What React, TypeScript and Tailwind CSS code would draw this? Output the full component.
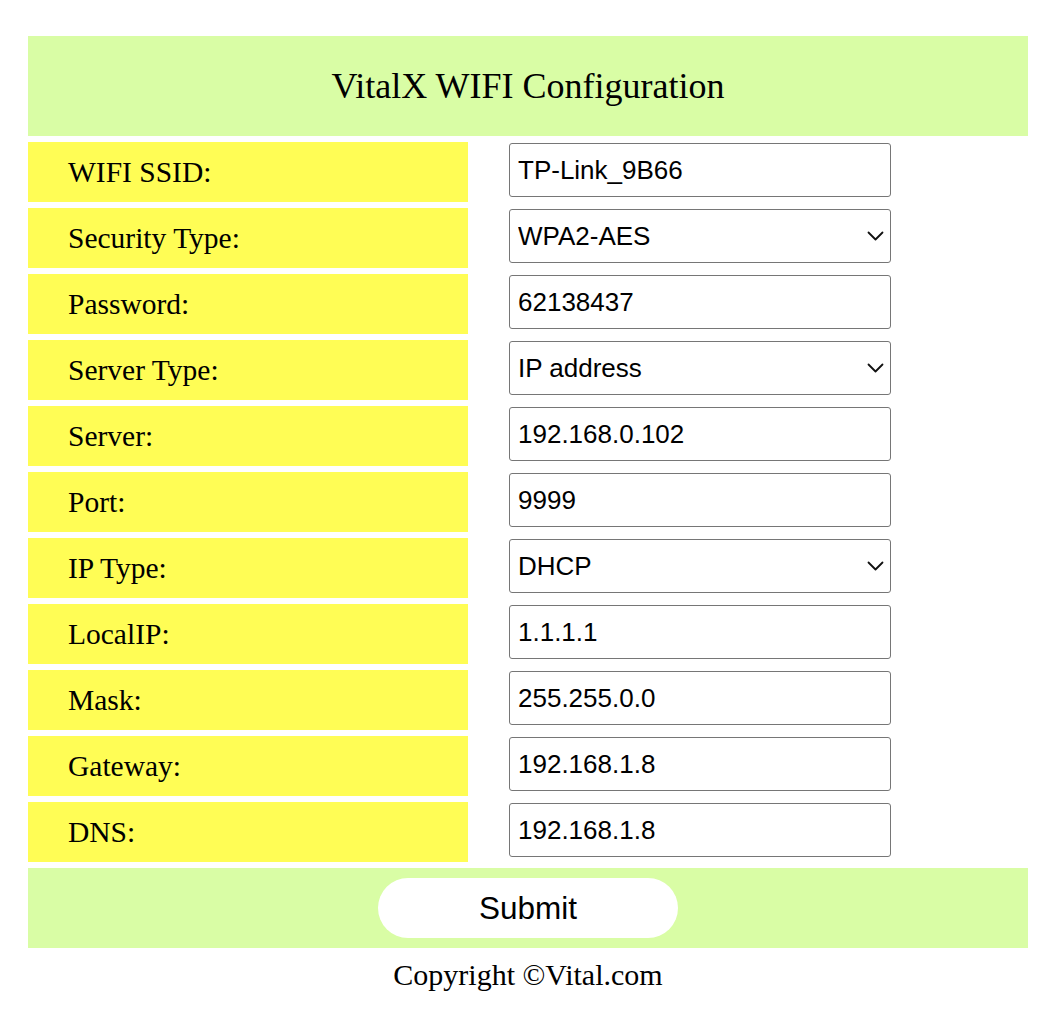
import React from "react";

type Field = {
  label: string;
  value: string;
  options?: string[];
};

const fields: Field[] = [
  { label: "WIFI SSID:", value: "TP-Link_9B66" },
  { label: "Security Type:", value: "WPA2-AES", options: ["WPA2-AES", "WPA-TKIP", "OPEN"] },
  { label: "Password:", value: "62138437" },
  { label: "Server Type:", value: "IP address", options: ["IP address", "Domain name"] },
  { label: "Server:", value: "192.168.0.102" },
  { label: "Port:", value: "9999" },
  { label: "IP Type:", value: "DHCP", options: ["DHCP", "Static"] },
  { label: "LocalIP:", value: "1.1.1.1" },
  { label: "Mask:", value: "255.255.0.0" },
  { label: "Gateway:", value: "192.168.1.8" },
  { label: "DNS:", value: "192.168.1.8" },
];

const Chevron = () => (
  <svg
    className="pointer-events-none absolute right-[7px] top-1/2 -translate-y-1/2"
    width="17"
    height="10"
    viewBox="0 0 17 10"
    fill="none"
  >
    <path d="M1.5 1.5 L8.5 8.5 L15.5 1.5" stroke="#111" strokeWidth="1.8" strokeLinecap="round" strokeLinejoin="round" />
  </svg>
);

const App = () => {
  return (
    <div className="min-h-screen bg-white pt-[36px] pl-[28px] font-['Liberation_Serif','Times_New_Roman',serif] text-black">
      <form className="flex w-[1000px] flex-col gap-[6px]" onSubmit={(e) => e.preventDefault()}>
        <div className="flex h-[100px] items-center justify-center bg-[#d9fda5] text-[36px]">
          VitalX WIFI Configuration
        </div>

        {fields.map((f) => (
          <div key={f.label} className="flex gap-[6px]">
            <div className="flex h-[60px] w-[440px] items-center bg-[#fffd55] pl-[40px] text-[29.5px]">
              {f.label}
            </div>
            <div className="flex-1 pl-[35px] pt-[1px]">
              {f.options ? (
                <div className="relative w-[382px]">
                  <select
                    defaultValue={f.value}
                    className="h-[54px] w-full appearance-none rounded-[3px] border border-[#767676] bg-white pl-[8px] font-['Liberation_Sans',Arial,sans-serif] text-[26px] outline-none"
                  >
                    {f.options.map((o) => (
                      <option key={o}>{o}</option>
                    ))}
                  </select>
                  <Chevron />
                </div>
              ) : (
                <input
                  type="text"
                  defaultValue={f.value}
                  className="h-[54px] w-[382px] rounded-[3px] border border-[#767676] bg-white pl-[8px] font-['Liberation_Sans',Arial,sans-serif] text-[26px] outline-none"
                />
              )}
            </div>
          </div>
        ))}

        <div className="flex h-[80px] items-center justify-center bg-[#d9fda5]">
          <button
            type="submit"
            className="h-[60px] w-[300px] rounded-full bg-white pt-[1px] font-['Liberation_Sans',Arial,sans-serif] text-[31.5px]"
          >
            Submit
          </button>
        </div>
      </form>

      <div className="mt-[10px] w-[1000px] text-center text-[30px] leading-[1.15]">
        Copyright ©Vital.com
      </div>
    </div>
  );
};

export default App;
